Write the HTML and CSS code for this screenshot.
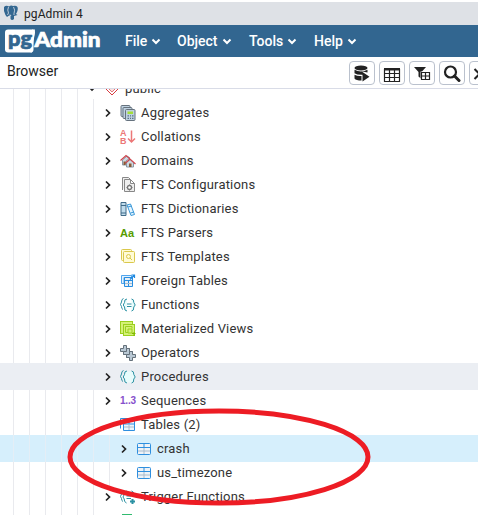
FILE: index.html
```
<!DOCTYPE html>
<html lang="en">
<head>
<meta charset="utf-8">
<title>pgAdmin 4</title>
<link rel="stylesheet" href="styles.css">
</head>
<body>
<svg class="defs" width="0" height="0">
  <symbol id="tbl" viewBox="0 0 16 16"><rect x="1.5" y="2.5" width="13" height="11" rx="1" fill="#eef3f8" stroke="#2e8fdf"/><path d="M2 6.500h12M8 3v3.500" stroke="#2e8fdf"/><path d="M2 10h12M8 7v6" stroke="#aabccc"/></symbol>
</svg>
<div class="titlebar">
  <svg class="elephant" viewBox="0 0 16 16"><path d="M1 2Q3 0 6 1.500Q8 0 10 1Q13 0 14.500 2Q15.500 5 13 9L14.500 10L11 11V14Q9 16 7.500 14V10Q5 11 4 12Q2 10 1 6Z" fill="#336791"/><path d="M5.500 2Q4 5 5.500 8L4.500 10M10.500 2Q12.500 5 11 8.500L11 10M7 9.500L8 11" fill="none" stroke="#dee1e6" stroke-width=".8"/></svg>
  <span>pgAdmin 4</span>
</div>
<nav class="navbar">
  <svg class="logo" width="99" height="28"><path d="M3 2.500h27L27 25.500H3q-3 0-3-3v-17q0-3 3-3Z" fill="#fff"/><path d="M27 2.500h0q3 0 3 3L28.500 14v8.500q0 3-3 3" fill="#fff"/><text class="brand pg" x="3" y="19" textLength="24" lengthAdjust="spacingAndGlyphs">pg</text><text class="brand admin" x="29.5" y="19.5" textLength="66" lengthAdjust="spacingAndGlyphs">Admin</text></svg>
  <a class="menu file">File<svg viewBox="0 0 10 7"><path d="M1.500 1.500 5 5l3.500-3.500"/></svg></a>
  <a class="menu object">Object<svg viewBox="0 0 10 7"><path d="M1.500 1.500 5 5l3.500-3.500"/></svg></a>
  <a class="menu tools">Tools<svg viewBox="0 0 10 7"><path d="M1.500 1.500 5 5l3.500-3.500"/></svg></a>
  <a class="menu help">Help<svg viewBox="0 0 10 7"><path d="M1.500 1.500 5 5l3.500-3.500"/></svg></a>
</nav>
<header class="panel-head">
  <span class="panel-title">Browser</span>
  <div class="tools-row">
    <button><svg viewBox="0 0 18 18"><ellipse cx="8" cy="3" rx="6.500" ry="2.500"/><path d="M1.500 4.800Q8 8.300 14.500 4.800V7.500L9.500 6.500V9.800Q4 10 1.500 8.300ZM1.500 9.800Q5 11.500 8.500 11V15.500Q3 15.500 1.500 13.500ZM9.500 7 16.500 11.800 9.500 16.500Z"/></svg></button>
    <button><svg viewBox="0 0 18 18"><path d="M1.500 4.500h15v12h-15ZM1.500 8.500h15M1.500 12.500h15M6.500 5v11M11.500 5v11" fill="none" stroke="#222" stroke-width="1.200"/><path d="M1 3h16v2.500H1Z"/></svg></button>
    <button><svg viewBox="0 0 18 18"><path d="M1 2h12L9 6.500v8L5.500 11.500V7Z"/><rect x="7.500" y="6.500" width="10" height="9" fill="#fff"/><path d="M8.500 7.500h8v7h-8ZM8.500 11h8M12.500 7.500v7" fill="none" stroke="#222" stroke-width="1.200"/></svg></button>
    <button><svg viewBox="0 0 18 18"><circle cx="7.500" cy="7" r="5.500" fill="none" stroke="#222" stroke-width="2.200"/><path d="m11.500 11 4.500 4.500" stroke="#222" stroke-width="3" stroke-linecap="round"/></svg></button>
    <button><svg viewBox="0 0 18 18"><path d="m1.500 4 5 5-5 5" fill="none" stroke="#222" stroke-width="2"/></svg></button>
  </div>
</header>
<main class="tree">
  <div class="row"><i></i><i></i><i></i><i></i><i></i><svg class="chev" viewBox="0 0 8 10"><path d="m1 3 3 3 3-3"/></svg><svg class="icon" viewBox="0 0 16 16"><path d="m8 2 6 6-6 6-6-6Z" fill="#fff" stroke="#d8393f"/><path d="m8 5 3 3-3 3-3-3Z" fill="#fbe1e1" stroke="#e07779"/></svg><span>public</span></div>
  <div class="row"><i></i><i></i><i></i><i></i><i></i><i></i><svg class="chev" viewBox="0 0 8 10"><path d="m2 1.500 3.500 3.500L2 8.500"/></svg><svg class="icon" viewBox="0 0 16 16"><g fill="#bed1e0" stroke="#66727e"><rect x="1" y=".5" width="9" height="11" rx="1"/><rect x="3" y="2.500" width="9" height="11" rx="1"/><rect x="5.500" y="4.500" width="9.500" height="11" rx="1"/></g><path d="M7.500 6.500h5.500v2.500H7.500Z" fill="#a3df38"/><path d="M7.500 10.800h1.500m1 0h1m1 0h1.500M7.500 13.300h1.500m1 0h1m1 0h1.500" stroke="#5b7488" stroke-width="1.300"/></svg><span>Aggregates</span></div>
  <div class="row"><i></i><i></i><i></i><i></i><i></i><i></i><svg class="chev" viewBox="0 0 8 10"><path d="m2 1.500 3.500 3.500L2 8.500"/></svg><svg class="icon" viewBox="0 0 16 16"><text class="ab" x="0" y="6.500">A</text><text class="ab" x="0" y="15">B</text><path d="M11.500 1.500v11.500M8 9.500l3.500 3.500L15 9.500" fill="none" stroke="#ec7777" stroke-width="1.500"/></svg><span>Collations</span></div>
  <div class="row"><i></i><i></i><i></i><i></i><i></i><i></i><svg class="chev" viewBox="0 0 8 10"><path d="m2 1.500 3.500 3.500L2 8.500"/></svg><svg class="icon" viewBox="0 0 16 16"><path d="M2.500 7v5H6V8l4-3-3-2Z" fill="#cdd9e2" stroke="#8998a5"/><path d="M6.500 9.500V14h7V9.500L10 6.500Z" fill="#cdd9e2" stroke="#8998a5"/><path d="m.5 7.500 5.500-5 4 3.500M5 10.500l5-4.500 5.500 5" fill="none" stroke="#cf454d" stroke-width="1.200"/><path d="M3.500 8.500h2V12h-2ZM9 10.500h2.500V14H9Z" fill="#8b5a35"/></svg><span>Domains</span></div>
  <div class="row"><i></i><i></i><i></i><i></i><i></i><i></i><svg class="chev" viewBox="0 0 8 10"><path d="m2 1.500 3.500 3.500L2 8.500"/></svg><svg class="icon" viewBox="0 0 16 16"><path d="M2.500 13V.5h6l2 2M4.500 14.500V2.500h6l4 4v8ZM10.500 2.500v4h4" fill="#eee" stroke="#888"/><circle cx="9.500" cy="10.500" r="2" fill="#fff" stroke="#777" stroke-width="1.300"/><path d="M9.500 7.500v1m0 4v1M6.500 10.500h1m4 0h1" stroke="#777"/></svg><span>FTS Configurations</span></div>
  <div class="row"><i></i><i></i><i></i><i></i><i></i><i></i><svg class="chev" viewBox="0 0 8 10"><path d="m2 1.500 3.500 3.500L2 8.500"/></svg><svg class="icon" viewBox="0 0 16 16"><path d="M1 1.500h5v13H1ZM1 4.500h5M1 12h5" fill="#c1dcec" stroke="#416b88"/><path d="m7 4 3.500-1 4 10.500-3.500 1ZM8 6l3.500-1m-1 7 3.500-1" fill="#e4f4ff" stroke="#3998d8"/></svg><span>FTS Dictionaries</span></div>
  <div class="row"><i></i><i></i><i></i><i></i><i></i><i></i><svg class="chev" viewBox="0 0 8 10"><path d="m2 1.500 3.500 3.500L2 8.500"/></svg><b class="icon parser">Aa</b><span>FTS Parsers</span></div>
  <div class="row"><i></i><i></i><i></i><i></i><i></i><i></i><svg class="chev" viewBox="0 0 8 10"><path d="m2 1.500 3.500 3.500L2 8.500"/></svg><svg class="icon" viewBox="0 0 16 16"><g fill="#fffbd5" stroke="#dac84c"><rect x="1.500" y=".5" width="10" height="11" rx="1"/><rect x="3.500" y="2.500" width="11" height="11" rx="1"/><circle cx="8.500" cy="7.500" r="2"/><path d="m10 9 2 2"/></g></svg><span>FTS Templates</span></div>
  <div class="row"><i></i><i></i><i></i><i></i><i></i><i></i><svg class="chev" viewBox="0 0 8 10"><path d="m2 1.500 3.500 3.500L2 8.500"/></svg><svg class="icon" viewBox="0 0 16 16"><path d="M1.500 10.500v-8h10v2H4v6Z" fill="#e3f1fd" stroke="#50a5ed"/><path d="M4.500 4.500h8v9h-8ZM4.500 7.500h8M8.500 7v6" fill="#e8eff5" stroke="#278de0"/><path d="M5 10.500h7" stroke="#a7bdd0"/><path d="m10 6.500 4-4M11.500 2H14.500v3" fill="none" stroke="#1e88e0" stroke-width="1.200"/></svg><span>Foreign Tables</span></div>
  <div class="row"><i></i><i></i><i></i><i></i><i></i><i></i><svg class="chev" viewBox="0 0 8 10"><path d="m2 1.500 3.500 3.500L2 8.500"/></svg><svg class="icon fn" viewBox="0 0 16 16"><path d="M3.500 1.500Q1.500 2 1.500 5L.5 7.500l1 2Q1.500 12 3 12.500"/><path d="M7 2Q4.200 2 4.500 5.500L3.200 8l1.300 2Q4.200 14 7 14M11.500 2Q14 2 13.800 5.500L15.200 8l-1.400 2Q14 14 11.500 14M7 7H11.500M7 9.500H11.500" fill="#e8fcfc"/></svg><span>Functions</span></div>
  <div class="row"><i></i><i></i><i></i><i></i><i></i><i></i><svg class="chev" viewBox="0 0 8 10"><path d="m2 1.500 3.500 3.500L2 8.500"/></svg><svg class="icon" viewBox="0 0 16 16"><g fill="#d5f178" stroke="#9ad01f"><rect x=".5" y=".5" width="12" height="12"/><rect x="3.500" y="3.500" width="11" height="11"/><path d="M12 7.500V5.500H5.500v6H8M8 8h4v4H8Z"/></g><path d="M12 12.500h3.500m-1.500-1.500v4" stroke="#80b800"/></svg><span>Materialized Views</span></div>
  <div class="row"><i></i><i></i><i></i><i></i><i></i><i></i><svg class="chev" viewBox="0 0 8 10"><path d="m2 1.500 3.500 3.500L2 8.500"/></svg><svg class="icon" viewBox="0 0 16 16"><g fill="#b9c8d4" stroke="#65717b"><path d="M3.500.5h3v3h3v3h-3v3h-3v-3h-3v-3h3Z"/><path d="M6.500 3.500h3v3h3v3h-3v3h-3v-3h-3v-3h3Z"/><path d="M9.500 6.500h3v3h3v3h-3v3h-3v-3h-3v-3h3Z"/></g></svg><span>Operators</span></div>
  <div class="row hover"><i></i><i></i><i></i><i></i><i></i><i></i><svg class="chev" viewBox="0 0 8 10"><path d="m2 1.500 3.500 3.500L2 8.500"/></svg><svg class="icon fn" viewBox="0 0 16 16"><path d="M3.500 1.500Q1.500 2 1.500 5L.5 7.500l1 2Q1.500 12 3 12.500"/><path d="M7 2Q4.200 2 4.500 5.500L3.200 8l1.300 2Q4.200 14 7 14M11.500 2Q14 2 13.800 5.500L15.200 8l-1.400 2Q14 14 11.500 14" fill="#e8fcfc"/><path d="M7 2.500h4.500v11H7Z" fill="#e8fcfc" stroke="none"/></svg><span>Procedures</span></div>
  <div class="row"><i></i><i></i><i></i><i></i><i></i><i></i><svg class="chev" viewBox="0 0 8 10"><path d="m2 1.500 3.500 3.500L2 8.500"/></svg><b class="icon seq">1..3</b><span>Sequences</span></div>
  <div class="row"><i></i><i></i><i></i><i></i><i></i><i></i><svg class="chev" viewBox="0 0 8 10"></svg><svg class="icon" viewBox="0 0 16 16"><path d="M.5 11.500v-10h12" fill="none" stroke="#2e8fdf"/><path d="M3.500 3.500h11v10h-11ZM3.500 7h11M9 4v3" fill="#edf5fc" stroke="#2e8fdf"/><path d="M4 10h10M9 7.500V13" stroke="#aabccc"/></svg><span>Tables (2)</span></div>
  <div class="row selected"><i></i><i></i><i></i><i></i><i></i><i></i><i></i><svg class="chev" viewBox="0 0 8 10"><path d="m2 1.500 3.500 3.500L2 8.500"/></svg><svg class="icon"><use href="#tbl"/></svg><span>crash</span></div>
  <div class="row"><i></i><i></i><i></i><i></i><i></i><i></i><i></i><svg class="chev" viewBox="0 0 8 10"><path d="m2 1.500 3.500 3.500L2 8.500"/></svg><svg class="icon"><use href="#tbl"/></svg><span>us_timezone</span></div>
  <div class="row"><i></i><i></i><i></i><i></i><i></i><i></i><svg class="chev" viewBox="0 0 8 10"><path d="m2 1.500 3.500 3.500L2 8.500"/></svg><svg class="icon fn" viewBox="0 0 16 16"><path d="M3 2Q1.500 2 1.500 5L.5 7.500l1 2Q1.500 12 3 12.500M6.500 2Q4 2.500 4.200 5.500L3 8l1.200 2Q4 13 6.500 14M11.500 2Q14 2.500 13.800 5.500L15 8M6.500 7H11M6.500 9.500H11"/><path d="M12.500 10v5M10 12.500h5" stroke-width="2"/></svg><span>Trigger Functions</span></div>
  <div class="row"><i></i><i></i><i></i><i></i><i></i><i></i><svg class="chev" viewBox="0 0 8 10"></svg><svg class="icon" viewBox="0 0 16 16"><rect x="2.500" y="1.500" width="9" height="9" fill="#75dda0" stroke="#31bb70"/></svg></div>
  <svg class="annotation" viewBox="0 0 304 98"><ellipse cx="152" cy="49" rx="149" ry="46" fill="none" stroke="#ed1c24" stroke-width="5"/></svg>
</main>
</body>
</html>
```
FILE: styles.css
```
* { box-sizing: border-box; }
body { margin: 0; width: 478px; height: 515px; overflow: hidden; display: flex; flex-direction: column; background: #fff; color: #222; font-family: Roboto, sans-serif; font-size: 13px; }
.defs { position: absolute; }
.titlebar { height: 23px; margin-top: 2px; flex: none; display: flex; align-items: center; gap: 5px; padding-left: 3px; background: #dee1e6; font-size: 12px; color: #222; }
.titlebar span { padding-top: 1px; letter-spacing: .1px; }
.elephant { width: 16px; height: 16px; margin-top: -2px; }
.navbar { height: 32px; flex: none; display: flex; align-items: center; padding-left: 5px; background: #326690; color: #fff; font-size: 14px; }
.logo { flex: none; margin-right: 21px; }
.brand { font: 900 20px Lato, sans-serif; stroke-width: .7; }
.pg { fill: #326690; stroke: #326690; }
.admin { fill: #fff; stroke: #fff; }
.menu { display: flex; align-items: center; gap: 4px; font-weight: 500; }
.menu svg { width: 10px; height: 7px; fill: none; stroke: #fff; stroke-width: 2; }
.file { width: 52px; }
.object { width: 72px; }
.tools { width: 65px; }
.panel-head { height: 32px; flex: none; display: flex; padding-left: 7px; border-bottom: 1px solid #d9dce7; background: #fff; position: relative; z-index: 2; }
.panel-title { width: 342px; flex: none; padding-top: 6px; font-size: 14px; }
.tools-row { display: flex; gap: 4px; padding-top: 4px; }
.tools-row button { width: 26px; height: 24px; flex: none; padding: 1px 3px 0; border: 1px solid #bac1cd; border-radius: 4px; background: #fff; }
.tools-row svg { width: 18px; height: 18px; display: block; fill: #222; }
.tree { flex: 1; position: relative; margin-top: -14px; }
.row { height: 27px; margin-bottom: -3px; display: flex; align-items: center; padding-left: 13px; }
.row i { width: 16px; align-self: stretch; border-left: 1px solid #e9eaee; }
.chev { width: 8px; height: 10px; margin-left: -5px; fill: none; stroke: #222; stroke-width: 1.7; }
.icon { width: 16px; height: 16px; flex: none; margin: 0 5px 0 8px; overflow: visible; }
.row span { font-size: 13px; letter-spacing: .18px; color: #333; }
.fn { fill: none; stroke: #2b91a3; }
.ab { font: bold 9px "Liberation Sans", sans-serif; fill: #ec7777; }
.parser, .seq { font-family: "Liberation Sans", sans-serif; line-height: 16px; white-space: nowrap; }
.parser { font-size: 11px; color: #579c00; }
.seq { font-size: 10px; line-height: 15px; letter-spacing: -.2px; color: #8650cc; }
.hover, .selected { position: relative; z-index: 1; }
.hover { background: #ebeef3; }
.selected { background: #d6effc; }
.hover i { border-color: transparent; }
.selected i { border-color: #e4eef6; }
.annotation { position: absolute; z-index: 3; left: 67px; top: 333px; width: 304px; height: 98px; }
```
